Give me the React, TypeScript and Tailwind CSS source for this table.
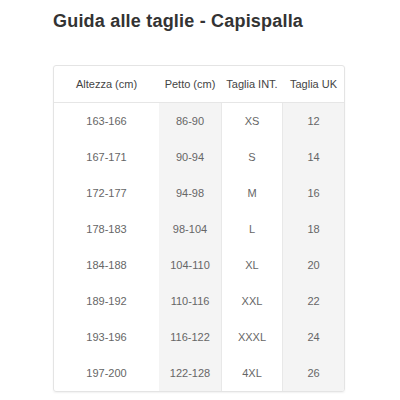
import React from 'react';

const ROWS = [
  ['163-166', '86-90', 'XS', '12'],
  ['167-171', '90-94', 'S', '14'],
  ['172-177', '94-98', 'M', '16'],
  ['178-183', '98-104', 'L', '18'],
  ['184-188', '104-110', 'XL', '20'],
  ['189-192', '110-116', 'XXL', '22'],
  ['193-196', '116-122', 'XXXL', '24'],
  ['197-200', '122-128', '4XL', '26'],
];

export default function App() {
  return (
    <div className="w-[400px] h-[400px] bg-white font-['Liberation_Sans',sans-serif] pl-[53px] pt-[11px]">
      <h1 className="text-[18px] leading-[20px] font-bold text-[#333] tracking-[0.2px]">
        Guida alle taglie - Capispalla
      </h1>

      <div className="mt-[34px] w-[292px] border border-[#e4e4e4] rounded-[3px] overflow-hidden shadow-[0_1px_2px_rgba(0,0,0,0.06)]">
        <div className="grid grid-cols-[105px_62px_62px_61px] h-[37px] items-center text-[11px] text-[#444] border-b border-[#e6e6e6] text-center">
          <span>Altezza (cm)</span>
          <span>Petto (cm)</span>
          <span>Taglia INT.</span>
          <span>Taglia UK</span>
        </div>
        <div className="grid grid-cols-[105px_62px_62px_61px] text-[11px] text-[#666] text-center">
          <div className="flex flex-col">
            {ROWS.map((r) => (
              <div key={r[0]} className="h-[36px] flex items-center justify-center">{r[0]}</div>
            ))}
          </div>
          <div className="flex flex-col bg-[#f4f4f4]">
            {ROWS.map((r) => (
              <div key={r[1]} className="h-[36px] flex items-center justify-center">{r[1]}</div>
            ))}
          </div>
          <div className="flex flex-col border-l border-r border-[#e8e8e8]">
            {ROWS.map((r) => (
              <div key={r[2]} className="h-[36px] flex items-center justify-center">{r[2]}</div>
            ))}
          </div>
          <div className="flex flex-col bg-[#f4f4f4]">
            {ROWS.map((r) => (
              <div key={r[3]} className="h-[36px] flex items-center justify-center">{r[3]}</div>
            ))}
          </div>
        </div>
      </div>
    </div>
  );
}
